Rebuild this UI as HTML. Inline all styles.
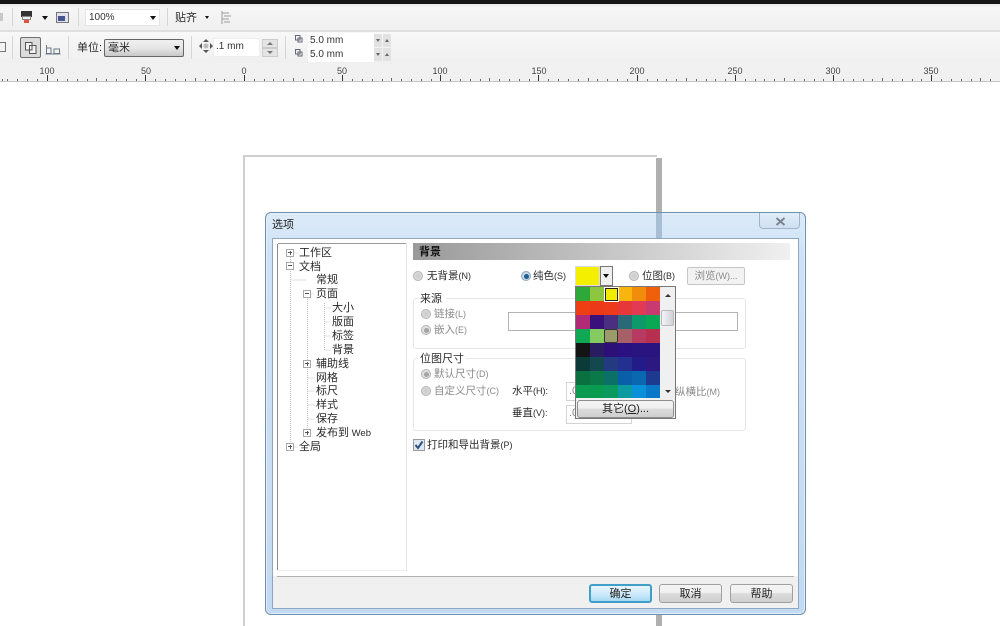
<!DOCTYPE html>
<html lang="zh"><head><meta charset="utf-8"><title>选项</title>
<style>
html,body{margin:0;padding:0;width:1000px;height:626px;overflow:hidden;background:#fff}
body{position:relative;font-family:"Liberation Sans","Noto Sans CJK SC",sans-serif;font-size:11px;color:#222;filter:blur(.35px)}
.a{position:absolute;box-sizing:border-box}
.t{position:absolute;white-space:nowrap;line-height:14px;height:14px;font-size:11px;color:#2a2a2a}
.l{font-size:10.500px}
small{font-size:9px}
.g{color:#8a8a8a}
.r{position:absolute;width:10px;height:10px;border-radius:50%;border:1px solid #b4b4b4;background:radial-gradient(#c8c8c8,#e4e4e4);box-sizing:border-box}
.r.on{background:#c4d6e6;border-color:#8ea6bc}
.r.on::after{content:"";position:absolute;left:1.500px;top:1.500px;width:5px;height:5px;border-radius:50%;background:#1f5f8f}
.r.dis.on{background:#e0e0e0;border-color:#b4b4b4}
.r.dis.on::after{background:#a4a4a4}
.box{position:absolute;border:1px solid #e6e6e6;border-radius:3px;box-sizing:border-box}
.inp{position:absolute;border:1px solid #b4b4b4;background:#fff;box-sizing:border-box}
.btn{position:absolute;box-sizing:border-box;border:1px solid #8e8e8e;border-radius:3px;background:linear-gradient(#f4f4f4,#f0f0f0 45%,#dcdcdc 50%,#cfcfcf);text-align:center;font-size:11px;line-height:18px;color:#222}
.pm{position:absolute;width:8px;height:8px;border:1px solid #a8a8a8;background:#fff;box-sizing:border-box}
.pm::before{content:"";position:absolute;left:1px;top:2px;width:4px;height:1px;background:#555}
.pm.p::after{content:"";position:absolute;left:2.500px;top:1px;width:1px;height:4px;background:#555}
.s{position:absolute;width:14px;height:14px}
.sep{position:absolute;width:1px;background:#d6d6d6}
.tri{position:absolute;width:0;height:0;border-left:3px solid transparent;border-right:3px solid transparent;border-top:4px solid #111}
</style></head><body>

<!-- top -->
<div class="a" style="left:0;top:0;width:1000px;height:4px;background:#151515"></div>
<div class="a" style="left:0;top:4px;width:1000px;height:26px;background:linear-gradient(#e8e8e8,#f6f6f6 15%,#efefef)"></div>
<div class="a" style="left:0;top:30px;width:1000px;height:2px;background:#e0e0e0"></div>
<div class="a" style="left:0;top:32px;width:1000px;height:31px;background:linear-gradient(#f8f8f8,#efefef)"></div>
<div class="a" style="left:0;top:63px;width:1000px;height:19px;background:#f1f1f1;border-bottom:1px solid #c4c4c4"></div>

<!-- toolbar row 1 -->
<div class="a" style="left:0;top:13px;width:3px;height:8px;background:#c8c8c8"></div>
<div class="sep" style="left:12px;top:8px;height:18px"></div>
<div class="a" style="left:21px;top:11px;width:11px;height:6px;background:#333"></div>
<div class="a" style="left:22px;top:16px;width:9px;height:4px;background:#eee;border:1px solid #888"></div>
<div class="a" style="left:24px;top:20px;width:5px;height:3px;background:#e0503a"></div>
<div class="tri" style="left:42px;top:16px"></div>
<div class="a" style="left:56px;top:12px;width:13px;height:11px;background:#dfe3ee;border:1px solid #777"></div>
<div class="a" style="left:58px;top:16px;width:7px;height:5px;background:#46558f"></div>
<div class="sep" style="left:78px;top:8px;height:18px"></div>
<div class="a" style="left:85px;top:9px;width:75px;height:17px;background:#fff;border:1px solid #e4e4e4"></div>
<div class="t" style="left:89px;top:11px;font-size:10px;color:#333">100%</div>
<div class="tri" style="left:150px;top:16px"></div>
<div class="sep" style="left:167px;top:8px;height:18px"></div>
<div class="t" style="left:175px;top:11px">贴齐</div>
<div class="tri" style="left:205px;top:16px;border-left-width:2.500px;border-right-width:2.500px;border-top-width:3px"></div>
<svg class="a" style="left:219px;top:10px" width="13" height="15"><path d="M3 1V14M3 3H10M5 6H12M3 9H10M5 12H11" stroke="#9a9a9a" fill="none"/></svg>

<!-- toolbar row 2 -->
<div class="a" style="left:-3px;top:42px;width:9px;height:10px;border:1px solid #777;background:#f4f4f4"></div>
<div class="sep" style="left:12px;top:36px;height:23px"></div>
<div class="a" style="left:20px;top:37px;width:21px;height:21px;border:1px solid #707070;border-radius:2px;background:#dcdcdc"></div>
<svg class="a" style="left:24px;top:41px" width="14" height="14"><path d="M1.500 1.500H8V9H1.500ZM5.500 4.500H12V12.500H5.500Z" stroke="#555" fill="#f2f2f2"/></svg>
<svg class="a" style="left:45px;top:44px" width="16" height="11"><path d="M1.500 1V9.500H6V4H1.500M9 9.500V5H14.500V9.500H9ZM.5 10H15.500" stroke="#6a7a88" fill="none"/></svg>
<div class="sep" style="left:68px;top:36px;height:23px"></div>
<div class="t" style="left:77px;top:41px">单位:</div>
<div class="a" style="left:104px;top:39px;width:80px;height:18px;border:1px solid #666;border-radius:2px;background:linear-gradient(#f0f0f0,#e6e6e6 50%,#c8c8c8)"></div>
<div class="t" style="left:108px;top:41px">毫米</div>
<div class="tri" style="left:174px;top:46px"></div>
<div class="sep" style="left:191px;top:36px;height:23px"></div>
<svg class="a" style="left:199px;top:39px" width="14" height="14"><path d="M7 0L10 3H4ZM7 14L10 11H4ZM0 7L3 4V10ZM14 7L11 4V10Z" fill="#555"/><circle cx="7" cy="7" r="2.500" fill="#bcbcbc"/></svg>
<div class="a" style="left:213px;top:38px;width:47px;height:19px;background:#fff;border:1px solid #eee"></div>
<div class="t" style="left:216px;top:40px;font-size:10px;color:#333">.1 mm</div>
<div class="a" style="left:262px;top:39px;width:16px;height:9px;background:#e4e4e4;border:1px solid #ccc"></div>
<div class="a" style="left:262px;top:48px;width:16px;height:9px;background:#e4e4e4;border:1px solid #ccc"></div>
<div class="tri" style="left:267px;top:42px;border-top:none;border-bottom:3px solid #777"></div>
<div class="tri" style="left:267px;top:51px;border-top:3px solid #777"></div>
<div class="sep" style="left:285px;top:36px;height:23px"></div>
<svg class="a" style="left:294px;top:34px" width="15" height="28"><path d="M1.500 1.500H6V6H1.500ZM4 4H8V8H4ZM1.500 15.500H6V20H1.500ZM4 18H8V22H4Z" stroke="#667" fill="none"/></svg>
<div class="a" style="left:308px;top:33px;width:66px;height:29px;background:#fff"></div>
<div class="t" style="left:310px;top:34px;font-size:10px;color:#333">5.0 mm</div>
<div class="t" style="left:310px;top:48px;font-size:10px;color:#333">5.0 mm</div>
<div class="a" style="left:374px;top:34px;width:8px;height:13px;background:#e2e2e2"></div>
<div class="a" style="left:383px;top:34px;width:8px;height:13px;background:#e2e2e2"></div>
<div class="a" style="left:374px;top:48px;width:8px;height:13px;background:#e2e2e2"></div>
<div class="a" style="left:383px;top:48px;width:8px;height:13px;background:#e2e2e2"></div>
<div class="tri" style="left:376px;top:39px;border-left-width:2px;border-right-width:2px;border-top:3px solid #666"></div>
<div class="tri" style="left:385px;top:39px;border-left-width:2px;border-right-width:2px;border-top:none;border-bottom:3px solid #666"></div>
<div class="tri" style="left:376px;top:53px;border-left-width:2px;border-right-width:2px;border-top:3px solid #666"></div>
<div class="tri" style="left:385px;top:53px;border-left-width:2px;border-right-width:2px;border-top:none;border-bottom:3px solid #666"></div>

<!-- ruler -->
<svg class="a" style="left:0;top:63px" width="1000" height="19">
<g font-family="Liberation Sans,sans-serif" font-size="9" fill="#444" text-anchor="middle">
<text x="47" y="11">100</text><text x="146" y="11">50</text><text x="244" y="11">0</text><text x="342" y="11">50</text><text x="440" y="11">100</text><text x="539" y="11">150</text><text x="637" y="11">200</text><text x="735" y="11">250</text><text x="833" y="11">300</text><text x="931" y="11">350</text>
</g>
<path d="M47.500 12V18M145.500 12V18M244.500 12V18M342.500 12V18M440.500 12V18M538.500 12V18M637.500 12V18M735.500 12V18M833.500 12V18M931.500 12V18" stroke="#333"/>
<path d="M2.500 16V18M7.500 16V18M17.500 16V18M27.500 16V18M37.500 16V18M57.500 16V18M67.500 16V18M77.500 16V18M87.500 16V18M96.500 15V18M106.500 16V18M116.500 16V18M126.500 16V18M136.500 16V18M155.500 16V18M165.500 16V18M175.500 16V18M185.500 16V18M195.500 15V18M205.500 16V18M214.500 16V18M224.500 16V18M234.500 16V18M254.500 16V18M264.500 16V18M273.500 16V18M283.500 16V18M293.500 15V18M303.500 16V18M313.500 16V18M323.500 16V18M332.500 16V18M352.500 16V18M362.500 16V18M372.500 16V18M382.500 16V18M391.500 15V18M401.500 16V18M411.500 16V18M421.500 16V18M431.500 16V18M450.500 16V18M460.500 16V18M470.500 16V18M480.500 16V18M489.500 15V18M499.500 16V18M509.500 16V18M519.500 16V18M529.500 16V18M548.500 16V18M558.500 16V18M568.500 16V18M578.500 16V18M588.500 15V18M597.500 16V18M607.500 16V18M617.500 16V18M627.500 16V18M647.500 16V18M657.500 16V18M666.500 16V18M676.500 16V18M686.500 15V18M696.500 16V18M706.500 16V18M715.500 16V18M725.500 16V18M745.500 16V18M755.500 16V18M764.500 16V18M774.500 16V18M784.500 15V18M794.500 16V18M804.500 16V18M814.500 16V18M823.500 16V18M843.500 16V18M853.500 16V18M863.500 16V18M872.500 16V18M882.500 15V18M892.500 16V18M902.500 16V18M912.500 16V18M921.500 16V18M941.500 16V18M951.500 16V18M961.500 16V18M971.500 16V18M980.500 15V18M990.500 16V18" stroke="#666"/>
</svg>

<!-- page -->
<div class="a" style="left:243px;top:155px;width:414px;height:2px;background:#cfcfcf"></div>
<div class="a" style="left:243px;top:155px;width:2px;height:471px;background:#cfcfcf"></div>
<div class="a" style="left:656px;top:158px;width:6px;height:468px;background:#b0b0b0"></div>

<!-- dialog -->
<div class="a" style="left:265px;top:212px;width:541px;height:403px;border-radius:6px;border:1px solid #6f8fae;background:linear-gradient(#dcebf9,#cfe2f5 10%,#c2daf2);box-shadow:inset 0 0 0 1px #e2eefa"></div>
<div class="a" style="left:656px;top:213px;width:6px;height:25px;background:#a8bed4"></div>
<div class="t" style="left:272px;top:218px;font-size:11px;color:#222">选项</div>
<div class="a" style="left:759px;top:213px;width:41px;height:16px;border:1px solid #9fb4c9;border-top:none;border-radius:0 0 4px 4px;background:linear-gradient(#e2edf8,#cfe0f1)"></div>
<svg class="a" style="left:775px;top:217px" width="11" height="9"><path d="M1.500 1L9.500 8M9.500 1L1.500 8" stroke="#7a8490" stroke-width="2" fill="none"/></svg>

<div class="a" style="left:272px;top:238px;width:527px;height:371px;background:#f0f0f0;border:1px solid #8fa8c0"></div>
<div class="a" style="left:273px;top:239px;width:525px;height:337px;background:#fff"></div>
<div class="a" style="left:277px;top:244px;width:1px;height:326px;background:#8a8a8a"></div>
<div class="a" style="left:278px;top:243px;width:129px;height:1px;background:#9a9a9a"></div>
<div class="a" style="left:406px;top:243px;width:1px;height:327px;background:#e4e4e4"></div>
<div class="a" style="left:277px;top:570px;width:130px;height:1px;background:#ececec"></div>
<div class="a" style="left:277px;top:576px;width:517px;height:1px;background:#b0b0b0"></div>

<!-- tree -->
<svg class="a" style="left:278px;top:245px" width="128" height="215">
<path d="M12.500 12V202M29.500 48V192M46.500 58V105M12.500 35H28M29.500 49H36M46.500 63H53M46.500 77H53M46.500 91H53M46.500 105H53M29.500 133H37M29.500 146H37M29.500 160H37M29.500 174H37M12.500 8H20M12.500 202H20" stroke="#c4c4c4" stroke-dasharray="1 1" fill="none"/>
</svg>
<div class="pm p" style="left:286px;top:249px"></div>
<div class="pm" style="left:286px;top:262px"></div>
<div class="pm" style="left:303px;top:290px"></div>
<div class="pm p" style="left:303px;top:360px"></div>
<div class="pm p" style="left:303px;top:429px"></div>
<div class="pm p" style="left:286px;top:443px"></div>
<div class="t" style="left:299px;top:246px">工作区</div>
<div class="t" style="left:299px;top:260px">文档</div>
<div class="t" style="left:316px;top:273px">常规</div>
<div class="t" style="left:316px;top:287px">页面</div>
<div class="t" style="left:332px;top:301px">大小</div>
<div class="t" style="left:332px;top:315px">版面</div>
<div class="t" style="left:332px;top:329px">标签</div>
<div class="t" style="left:332px;top:343px">背景</div>
<div class="t" style="left:316px;top:357px">辅助线</div>
<div class="t" style="left:316px;top:371px">网格</div>
<div class="t" style="left:316px;top:384px">标尺</div>
<div class="t" style="left:316px;top:398px">样式</div>
<div class="t" style="left:316px;top:412px">保存</div>
<div class="t" style="left:316px;top:426px">发布到<span style="font-size:9.500px"> Web</span></div>
<div class="t" style="left:299px;top:440px">全局</div>

<!-- header -->
<div class="a" style="left:413px;top:243px;width:377px;height:17px;background:linear-gradient(90deg,#9a9a9a,#c4c4c4 50%,#f0f0f0)"></div>
<div class="t" style="left:419px;top:245px;font-weight:bold;color:#111">背景</div>

<!-- radios row -->
<div class="r" style="left:413px;top:271px"></div>
<div class="t l" style="left:427px;top:269px">无背景<small>(N)</small></div>
<div class="r on" style="left:521px;top:271px"></div>
<div class="t l" style="left:533px;top:269px">纯色<small>(S)</small></div>
<div class="a" style="left:575px;top:266px;width:25px;height:20px;background:#f4ee00;border:1px solid #ddd"></div>
<div class="a" style="left:600px;top:266px;width:13px;height:20px;border:1px solid #777;background:#f0f0f0"></div>
<div class="tri" style="left:603px;top:274px"></div>
<div class="r" style="left:629px;top:271px"></div>
<div class="t l" style="left:642px;top:269px">位图<small>(B)</small></div>
<div class="a g" style="left:687px;top:267px;width:58px;height:18px;border:1px solid #c6c6c6;border-radius:2px;background:#f2f2f2;text-align:center;line-height:17px;font-size:10.500px">浏览<small>(W)...</small></div>

<!-- source group -->
<div class="box" style="left:413px;top:298px;width:333px;height:51px"></div>
<div class="a" style="left:418px;top:292px;width:28px;height:14px;background:#fff"></div>
<div class="t" style="left:420px;top:292px">来源</div>
<div class="r dis" style="left:421px;top:309px"></div>
<div class="t l g" style="left:434px;top:307px">链接<small>(L)</small></div>
<div class="r dis on" style="left:421px;top:325px"></div>
<div class="t l g" style="left:434px;top:323px">嵌入<small>(E)</small></div>
<div class="inp" style="left:508px;top:312px;width:230px;height:19px"></div>

<!-- size group -->
<div class="box" style="left:413px;top:358px;width:333px;height:73px"></div>
<div class="a" style="left:418px;top:352px;width:48px;height:14px;background:#fff"></div>
<div class="t" style="left:420px;top:352px">位图尺寸</div>
<div class="r dis on" style="left:421px;top:369px"></div>
<div class="t l g" style="left:434px;top:367px">默认尺寸<small>(D)</small></div>
<div class="r dis" style="left:421px;top:386px"></div>
<div class="t l g" style="left:434px;top:384px">自定义尺寸<small>(C)</small></div>
<div class="t l" style="left:512px;top:384px">水平<small>(H):</small></div>
<div class="t l" style="left:512px;top:406px">垂直<small>(V):</small></div>
<div class="inp" style="left:566px;top:382px;width:66px;height:19px;border-color:#d4d4d4"></div>
<div class="inp" style="left:566px;top:405px;width:66px;height:19px;border-color:#d4d4d4"></div>
<div class="t g" style="left:569px;top:384px">.0</div>
<div class="t g" style="left:569px;top:406px">.0</div>
<div class="t l g" style="left:675px;top:385px">纵横比<small>(M)</small></div>

<div class="a" style="left:413px;top:439px;width:12px;height:12px;border:1px solid #9a9a9a;background:#dfe8f2"></div>
<svg class="a" style="left:414px;top:440px" width="10" height="10"><path d="M1.500 5L4 8L8.500 1.500" stroke="#2e4f7f" stroke-width="2" fill="none"/></svg>
<div class="t l" style="left:427px;top:438px">打印和导出背景<small>(P)</small></div>

<!-- color popup -->
<div class="a" style="left:575px;top:286px;width:101px;height:133px;background:#f0f0f0;border:1px solid #777"></div>
<div class="s" style="left:576px;top:287px;background:#2fa83a"></div><div class="s" style="left:590px;top:287px;background:#8dc63f"></div><div class="s" style="left:604px;top:287px;background:#f2ea00"></div><div class="s" style="left:618px;top:287px;background:#f7b50e"></div><div class="s" style="left:632px;top:287px;background:#f28c0c"></div><div class="s" style="left:646px;top:287px;background:#f0600a"></div>
<div class="s" style="left:576px;top:301px;background:#ee3f14"></div><div class="s" style="left:590px;top:301px;background:#ec3a18"></div><div class="s" style="left:604px;top:301px;background:#ec3a1a"></div><div class="s" style="left:618px;top:301px;background:#e63838"></div><div class="s" style="left:632px;top:301px;background:#e23a55"></div><div class="s" style="left:646px;top:301px;background:#c83a70"></div>
<div class="s" style="left:576px;top:315px;background:#b02a78"></div><div class="s" style="left:590px;top:315px;background:#3a107a"></div><div class="s" style="left:604px;top:315px;background:#4a2f80"></div><div class="s" style="left:618px;top:315px;background:#2a6a78"></div><div class="s" style="left:632px;top:315px;background:#0d9a6a"></div><div class="s" style="left:646px;top:315px;background:#0aa855"></div>
<div class="s" style="left:576px;top:329px;background:#10a855"></div><div class="s" style="left:590px;top:329px;background:#85cc60"></div><div class="s" style="left:604px;top:329px;background:#9a9a6a"></div><div class="s" style="left:618px;top:329px;background:#a86068"></div><div class="s" style="left:632px;top:329px;background:#b83a60"></div><div class="s" style="left:646px;top:329px;background:#b83050"></div>
<div class="s" style="left:576px;top:343px;background:#141414"></div><div class="s" style="left:590px;top:343px;background:#2a1c60"></div><div class="s" style="left:604px;top:343px;background:#2c1078"></div><div class="s" style="left:618px;top:343px;background:#2a1080"></div><div class="s" style="left:632px;top:343px;background:#2a1480"></div><div class="s" style="left:646px;top:343px;background:#2a1480"></div>
<div class="s" style="left:576px;top:357px;background:#0c3a38"></div><div class="s" style="left:590px;top:357px;background:#144850"></div><div class="s" style="left:604px;top:357px;background:#243a80"></div><div class="s" style="left:618px;top:357px;background:#243090"></div><div class="s" style="left:632px;top:357px;background:#221c88"></div><div class="s" style="left:646px;top:357px;background:#2c1880"></div>
<div class="s" style="left:576px;top:371px;background:#0a7040"></div><div class="s" style="left:590px;top:371px;background:#0a7848"></div><div class="s" style="left:604px;top:371px;background:#0a7068"></div><div class="s" style="left:618px;top:371px;background:#0a60a8"></div><div class="s" style="left:632px;top:371px;background:#0a68b0"></div><div class="s" style="left:646px;top:371px;background:#1c3a90"></div>
<div class="s" style="left:576px;top:385px;height:13px;background:#0a9a50"></div><div class="s" style="left:590px;top:385px;height:13px;background:#0a9a50"></div><div class="s" style="left:604px;top:385px;height:13px;background:#0a9a60"></div><div class="s" style="left:618px;top:385px;height:13px;background:#0a9aa0"></div><div class="s" style="left:632px;top:385px;height:13px;background:#0a90d8"></div><div class="s" style="left:646px;top:385px;height:13px;background:#0a78c8"></div>
<div class="a" style="left:604px;top:287px;width:15px;height:15px;border:1px solid #fff;background:#f2ea00;box-shadow:inset 0 0 0 1px #222"></div>
<div class="a" style="left:604px;top:329px;width:14px;height:14px;border:1px solid #333;border-radius:2px;background:#9a9a6a"></div>
<div class="a" style="left:660px;top:287px;width:15px;height:111px;background:#f0f0f0"></div>
<div class="a" style="left:661px;top:310px;width:13px;height:16px;border:1px solid #b8b8c0;background:linear-gradient(90deg,#f4f4f8,#d0d0d8);border-radius:2px"></div>
<div class="tri" style="left:665px;top:294px;border-top:none;border-bottom:3px solid #333"></div>
<div class="tri" style="left:665px;top:390px;border-top-width:3px;border-top-color:#333"></div>
<div class="btn" style="left:577px;top:400px;width:97px;height:18px;line-height:16px">其它(<u>O</u>)...</div>

<!-- footer buttons -->
<div class="btn" style="left:589px;top:584px;width:63px;height:19px;border:2px solid #3f9fc8;background:linear-gradient(#e8f5fc,#cfeafa 50%,#a9daf4);line-height:16px">确定</div>
<div class="btn" style="left:659px;top:584px;width:63px;height:19px;line-height:18px;border-color:#a0a0a0">取消</div>
<div class="btn" style="left:730px;top:584px;width:63px;height:19px;line-height:18px;border-color:#a0a0a0">帮助</div>
</body></html>
